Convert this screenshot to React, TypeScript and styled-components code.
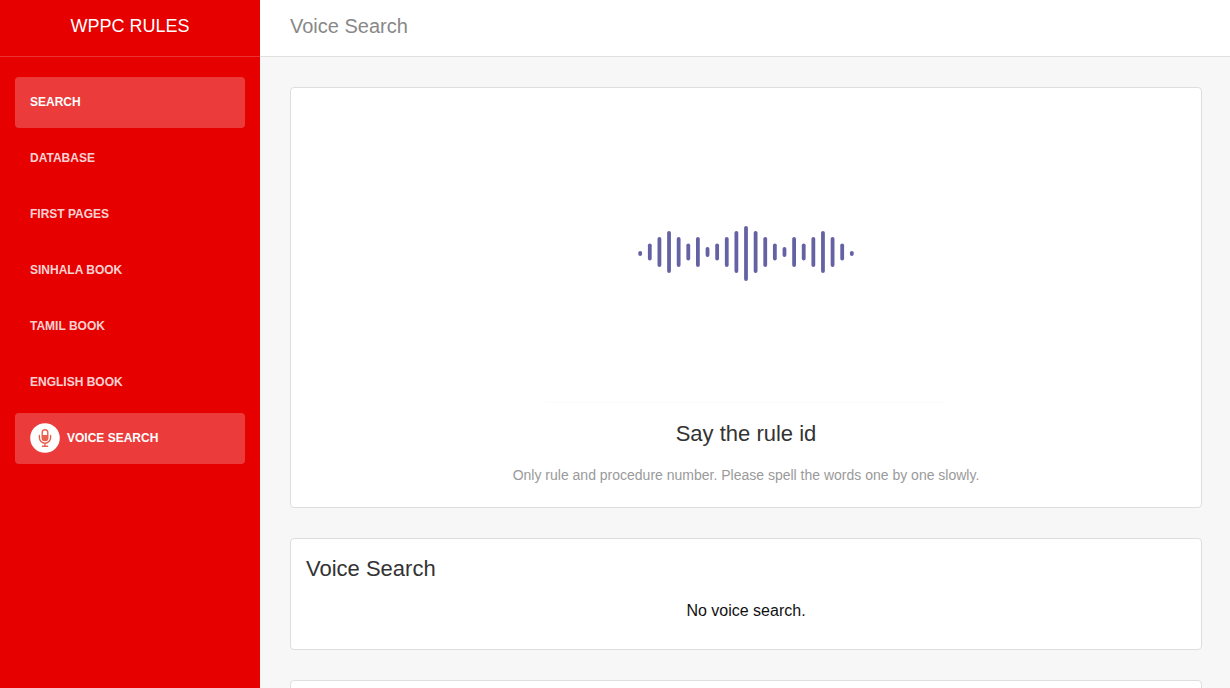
import React from "react";
import styled, { createGlobalStyle } from "styled-components";

const GlobalStyle = createGlobalStyle`
  * { box-sizing: border-box; }
  html, body { margin: 0; }
  body {
    background: #f7f7f7;
    color: #212529;
    font-family: "Liberation Sans", Arial, sans-serif;
    font-size: 16px;
    line-height: 24px;
  }
`;

const Page = styled.div`
  display: flex;
  min-height: 100vh;
`;

const Sidebar = styled.aside`
  flex: 0 0 260px;
  background: #e60000;
`;

const Brand = styled.a`
  display: block;
  height: 57px;
  padding: 11px 16px;
  border-bottom: 1px solid rgba(255, 255, 255, 0.2);
  color: #fff;
  font-size: 18px;
  line-height: 30px;
  text-align: center;
  text-decoration: none;
`;

const Nav = styled.nav`
  display: flex;
  flex-direction: column;
  gap: 5px;
  padding: 20px 15px;
`;

const NavLink = styled.a<{ $active?: boolean }>`
  display: flex;
  align-items: center;
  gap: 7px;
  height: 51px;
  padding: 0 15px 1px;
  border-radius: 4px;
  background: ${(p) => (p.$active ? "rgba(255, 255, 255, 0.23)" : "transparent")};
  color: ${(p) => (p.$active ? "#fff" : "rgba(255, 255, 255, 0.84)")};
  font-size: 12px;
  font-weight: 700;
  line-height: 30px;
  text-decoration: none;
  text-transform: uppercase;
`;

const Main = styled.main`
  flex: 1;
  min-width: 0;
`;

const TopBar = styled.header`
  height: 57px;
  padding: 11px 30px;
  border-bottom: 1px solid #e0e0e0;
  background: #fff;
`;

const PageTitle = styled.h1`
  margin: 0;
  color: #888;
  font-size: 20px;
  font-weight: 400;
  line-height: 30px;
`;

const Content = styled.div`
  display: flex;
  flex-direction: column;
  gap: 30px;
  padding: 30px 28px 0 30px;
  height: calc(100vh - 57px);
  overflow: hidden;
`;

const Card = styled.section<{ $center?: boolean }>`
  flex: none;
  padding: 15px;
  border: 1px solid #dedede;
  border-radius: 4px;
  background: #fff;
  text-align: ${(p) => (p.$center ? "center" : "left")};
`;

const CardTitle = styled.h2`
  margin: 0;
  color: #333;
  font-size: 22px;
  font-weight: 400;
  line-height: 30px;
`;

const WaveFrame = styled.div`
  display: flex;
  justify-content: center;
  margin-bottom: 16px;
`;

const Hint = styled.p`
  margin: 15px 0 6px;
  color: #9a9a9a;
  font-size: 14px;
  line-height: 22px;
`;

const Empty = styled.p`
  margin: 15px 0 11px;
  color: #111;
  text-align: center;
`;

const halfWave = [5, 17, 30, 42, 30, 17, 30, 10, 17, 30, 42];
const bars = [...halfWave, 55, 42, 30, 17, 10, 30, 17, 30, 42, 30, 17, 5];

// The peak and the end dots sit slightly lower than the other bars.
const barCenter = (h: number) => (h === 55 || h === 5 ? 150.4 : 148.9);

const VoiceWave = () => (
  <svg width="400" height="300" viewBox="0 0 400 300" aria-hidden="true">
    <g fill="#6562a4">
      {bars.map((h, i) => (
        <rect
          key={i}
          x={200 + (i - 11) * 9.62 - 1.9}
          y={barCenter(h) - h / 2}
          width="3.8"
          height={h}
          rx="1.9"
        />
      ))}
    </g>
    <path d="M0 299.5H400" stroke="#fffafa" />
  </svg>
);

const MicIcon = () => (
  <svg width="30" height="30" viewBox="0 0 30 30" aria-hidden="true">
    <circle cx="15" cy="15" r="14.8" fill="#fff" />
    <g fill="none" stroke="#e9604f" strokeWidth="1.4" strokeLinecap="round">
      <rect x="12.2" y="6.7" width="5.6" height="10.9" rx="2.8" />
      <path d="M9.4 12.4v2.2a5.6 5.6 0 0 0 11.2 0v-2.2M15 20.4v2.6M12.4 23.2h5.2" />
    </g>
    <path d="M12.2 12h5.6v2.8a2.8 2.8 0 0 1-5.6 0z" fill="#e9604f" />
  </svg>
);

const links = [
  { label: "Search", active: true },
  { label: "Database" },
  { label: "First Pages" },
  { label: "Sinhala Book" },
  { label: "Tamil Book" },
  { label: "English Book" },
  { label: "Voice Search", active: true, icon: <MicIcon /> },
];

export default function App() {
  return (
    <>
      <GlobalStyle />
      <Page>
        <Sidebar>
          <Brand href="#">WPPC RULES</Brand>
          <Nav>
            {links.map((l) => (
              <NavLink key={l.label} href="#" $active={l.active}>
                {l.icon}
                <span>{l.label}</span>
              </NavLink>
            ))}
          </Nav>
        </Sidebar>
        <Main>
          <TopBar>
            <PageTitle>Voice Search</PageTitle>
          </TopBar>
          <Content>
            <Card $center>
              <WaveFrame>
                <VoiceWave />
              </WaveFrame>
              <CardTitle>Say the rule id</CardTitle>
              <Hint>Only rule and procedure number. Please spell the words one by one slowly.</Hint>
            </Card>
            <Card>
              <CardTitle>Voice Search</CardTitle>
              <Empty>No voice search.</Empty>
            </Card>
            <Card />
          </Content>
        </Main>
      </Page>
    </>
  );
}
